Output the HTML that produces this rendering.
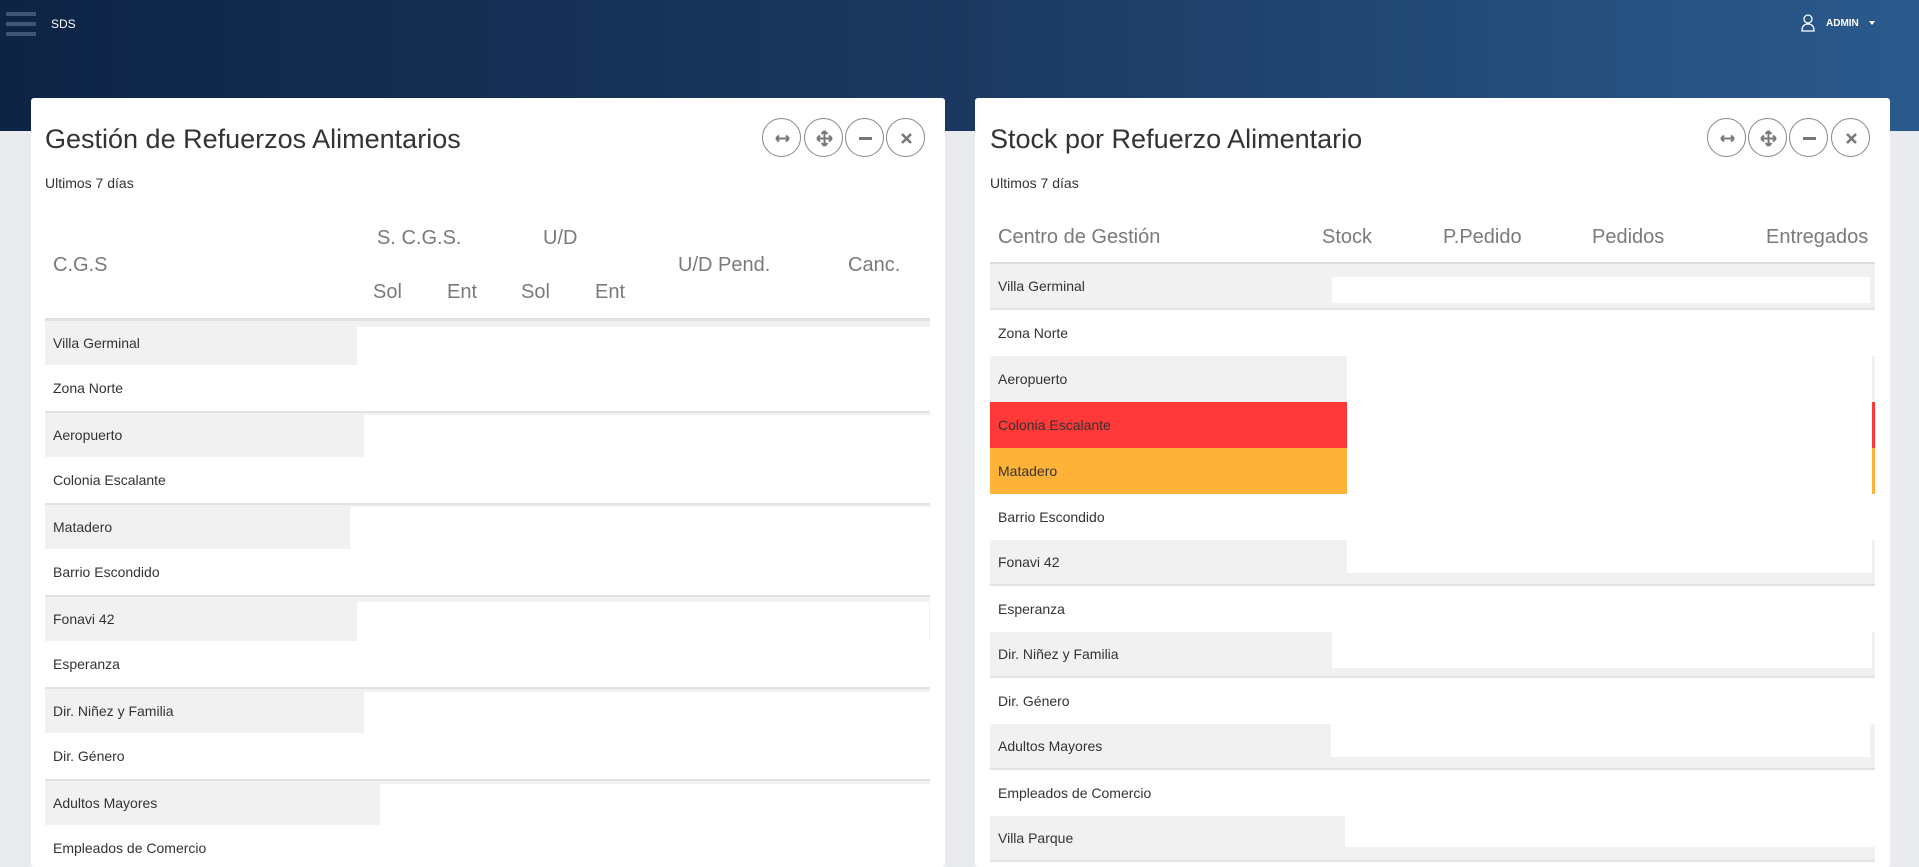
<!DOCTYPE html>
<html><head><meta charset="utf-8">
<style>
*{margin:0;padding:0;box-sizing:border-box}
html,body{width:1919px;height:867px;overflow:hidden}
body{background:#e9ebef;font-family:"Liberation Sans",sans-serif;position:relative}
.hdr{position:absolute;left:0;top:0;width:1919px;height:131px;background:linear-gradient(90deg,#0d2445 0%,#1b3960 50%,#2b5a8d 100%)}
.a{position:absolute}
.card{position:absolute;top:98px;height:769px;background:#fff;border-radius:3px}
.title{position:absolute;font-size:27px;color:#333;white-space:nowrap}
.sub{position:absolute;font-size:14px;color:#333}
.btn{position:absolute;width:39px;height:39px;border:1px solid #888;border-radius:50%;top:118px;background:#fff}
.btn svg{position:absolute;left:11px;top:11px}
.th{position:absolute;font-size:20px;color:#7a7a7a;white-space:nowrap}
.row{position:absolute;height:46px;font-size:14px;color:#333;line-height:46px;padding-left:8px;white-space:nowrap}
.g{background:#f1f1f1;border-top:2px solid #e2e2e2;line-height:44px}
.gb{background:#f1f1f1;border-bottom:2px solid #e2e2e2;line-height:44px}
.w{position:absolute;background:#fff}
</style></head><body>
<div class="hdr"></div>
<div class="a" style="left:6px;top:12px;width:30px;height:4px;background:#3f5676"></div>
<div class="a" style="left:6px;top:22px;width:30px;height:4px;background:#3f5676"></div>
<div class="a" style="left:6px;top:32px;width:30px;height:4px;background:#3f5676"></div>
<div class="a" style="left:51px;top:17px;color:#fff;font-size:12px">SDS</div>
<svg class="a" style="left:1800px;top:14px" width="16" height="18" viewBox="0 0 16 18"><circle cx="8" cy="5" r="4" fill="none" stroke="#fff" stroke-width="1.3"/><path d="M2 17 Q2 10 8 10 Q14 10 14 17 Z" fill="none" stroke="#fff" stroke-width="1.3"/></svg>
<div class="a" style="left:1826px;top:18px;color:#fff;font-size:10px;font-weight:bold">ADMIN</div>
<div class="a" style="left:1869px;top:21px;width:0;height:0;border-left:3px solid transparent;border-right:3px solid transparent;border-top:4px solid #fff"></div>

<!-- LEFT CARD -->
<div class="card" style="left:31px;width:914px"></div>
<div class="title" style="left:45px;top:124px">Gestión de Refuerzos Alimentarios</div>
<div class="sub" style="left:45px;top:175px">Ultimos 7 días</div>
<div class="btn" style="left:762px"><svg width="17" height="17" viewBox="0 0 17 17"><path d="M2 8.5h13M2 8.5l3-3M2 8.5l3 3M15 8.5l-3-3M15 8.5l-3 3" stroke="#777" stroke-width="2" fill="none"/></svg></div>
<div class="btn" style="left:804px"><svg width="17" height="17" viewBox="0 0 17 17"><path d="M8.5 1v15M1 8.5h15M8.5 1l-3 3M8.5 1l3 3M8.5 16l-3-3M8.5 16l3-3M1 8.5l3-3M1 8.5l3 3M16 8.5l-3-3M16 8.5l-3 3" stroke="#777" stroke-width="2" fill="none"/></svg></div>
<div class="btn" style="left:845px"><svg width="17" height="17" viewBox="0 0 17 17"><path d="M2 8.5h13" stroke="#777" stroke-width="3"/></svg></div>
<div class="btn" style="left:886px"><svg width="17" height="17" viewBox="0 0 17 17"><path d="M4 4l9 9M13 4l-9 9" stroke="#777" stroke-width="2.5"/></svg></div>
<div class="th" style="left:53px;top:254px">C.G.S</div>
<div class="th" style="left:377px;top:227px">S. C.G.S.</div>
<div class="th" style="left:543px;top:227px">U/D</div>
<div class="th" style="left:373px;top:281px">Sol</div>
<div class="th" style="left:447px;top:281px">Ent</div>
<div class="th" style="left:521px;top:281px">Sol</div>
<div class="th" style="left:595px;top:281px">Ent</div>
<div class="th" style="left:678px;top:254px">U/D Pend.</div>
<div class="th" style="left:848px;top:254px">Canc.</div>
<div class="a" style="left:45px;top:318px;width:885px;height:2px;background:#ddd"></div>
<div class="row g" style="left:45px;top:319px;width:885px">Villa Germinal</div><div class="w" style="left:357px;top:327px;width:573px;height:38px"></div>
<div class="row" style="left:45px;top:365px;width:885px">Zona Norte</div>
<div class="row g" style="left:45px;top:411px;width:885px">Aeropuerto</div><div class="w" style="left:364px;top:415px;width:566px;height:42px"></div>
<div class="row" style="left:45px;top:457px;width:885px">Colonia Escalante</div>
<div class="row g" style="left:45px;top:503px;width:885px">Matadero</div><div class="w" style="left:350px;top:507px;width:580px;height:42px"></div>
<div class="row" style="left:45px;top:549px;width:885px">Barrio Escondido</div>
<div class="row g" style="left:45px;top:595px;width:885px">Fonavi 42</div><div class="w" style="left:357px;top:602px;width:572px;height:39px"></div>
<div class="row" style="left:45px;top:641px;width:885px">Esperanza</div>
<div class="row g" style="left:45px;top:687px;width:885px">Dir. Niñez y Familia</div><div class="w" style="left:364px;top:692px;width:566px;height:41px"></div>
<div class="row" style="left:45px;top:733px;width:885px">Dir. Género</div>
<div class="row g" style="left:45px;top:779px;width:885px">Adultos Mayores</div><div class="w" style="left:380px;top:784px;width:550px;height:41px"></div>
<div class="row" style="left:45px;top:825px;width:885px">Empleados de Comercio</div>

<!-- RIGHT CARD -->
<div class="card" style="left:975px;width:915px"></div>
<div class="title" style="left:990px;top:124px">Stock por Refuerzo Alimentario</div>
<div class="sub" style="left:990px;top:175px">Ultimos 7 días</div>
<div class="btn" style="left:1707px"><svg width="17" height="17" viewBox="0 0 17 17"><path d="M2 8.5h13M2 8.5l3-3M2 8.5l3 3M15 8.5l-3-3M15 8.5l-3 3" stroke="#777" stroke-width="2" fill="none"/></svg></div>
<div class="btn" style="left:1748px"><svg width="17" height="17" viewBox="0 0 17 17"><path d="M8.5 1v15M1 8.5h15M8.5 1l-3 3M8.5 1l3 3M8.5 16l-3-3M8.5 16l3-3M1 8.5l3-3M1 8.5l3 3M16 8.5l-3-3M16 8.5l-3 3" stroke="#777" stroke-width="2" fill="none"/></svg></div>
<div class="btn" style="left:1789px"><svg width="17" height="17" viewBox="0 0 17 17"><path d="M2 8.5h13" stroke="#777" stroke-width="3"/></svg></div>
<div class="btn" style="left:1831px"><svg width="17" height="17" viewBox="0 0 17 17"><path d="M4 4l9 9M13 4l-9 9" stroke="#777" stroke-width="2.5"/></svg></div>
<div class="th" style="left:998px;top:226px">Centro de Gestión</div>
<div class="th" style="left:1322px;top:226px">Stock</div>
<div class="th" style="left:1443px;top:226px">P.Pedido</div>
<div class="th" style="left:1592px;top:226px">Pedidos</div>
<div class="th" style="left:1766px;top:226px">Entregados</div>
<div class="a" style="left:990px;top:262px;width:885px;height:2px;background:#ddd"></div>
<div class="row gb" style="left:990px;top:264px;width:885px">Villa Germinal</div><div class="w" style="left:1332px;top:277px;width:538px;height:26px"></div>
<div class="row" style="left:990px;top:310px;width:885px">Zona Norte</div>
<div class="row gb" style="left:990px;top:356px;width:885px;border-bottom:0;line-height:46px">Aeropuerto</div>
<div class="row" style="left:990px;top:402px;width:885px;background:#ff3838">Colonia Escalante</div>
<div class="row" style="left:990px;top:448px;width:885px;background:#ffb238">Matadero</div>
<div class="row" style="left:990px;top:494px;width:885px">Barrio Escondido</div>
<div class="row gb" style="left:990px;top:540px;width:885px">Fonavi 42</div>
<div class="w" style="left:1347px;top:356px;width:525px;height:217px"></div>
<div class="row" style="left:990px;top:586px;width:885px">Esperanza</div>
<div class="row gb" style="left:990px;top:632px;width:885px">Dir. Niñez y Familia</div><div class="w" style="left:1332px;top:632px;width:540px;height:36px"></div>
<div class="row" style="left:990px;top:678px;width:885px">Dir. Género</div>
<div class="row gb" style="left:990px;top:724px;width:885px">Adultos Mayores</div><div class="w" style="left:1331px;top:724px;width:539px;height:33px"></div>
<div class="row" style="left:990px;top:770px;width:885px">Empleados de Comercio</div>
<div class="row gb" style="left:990px;top:816px;width:885px">Villa Parque</div><div class="w" style="left:1345px;top:816px;width:530px;height:31px"></div>
</body></html>
